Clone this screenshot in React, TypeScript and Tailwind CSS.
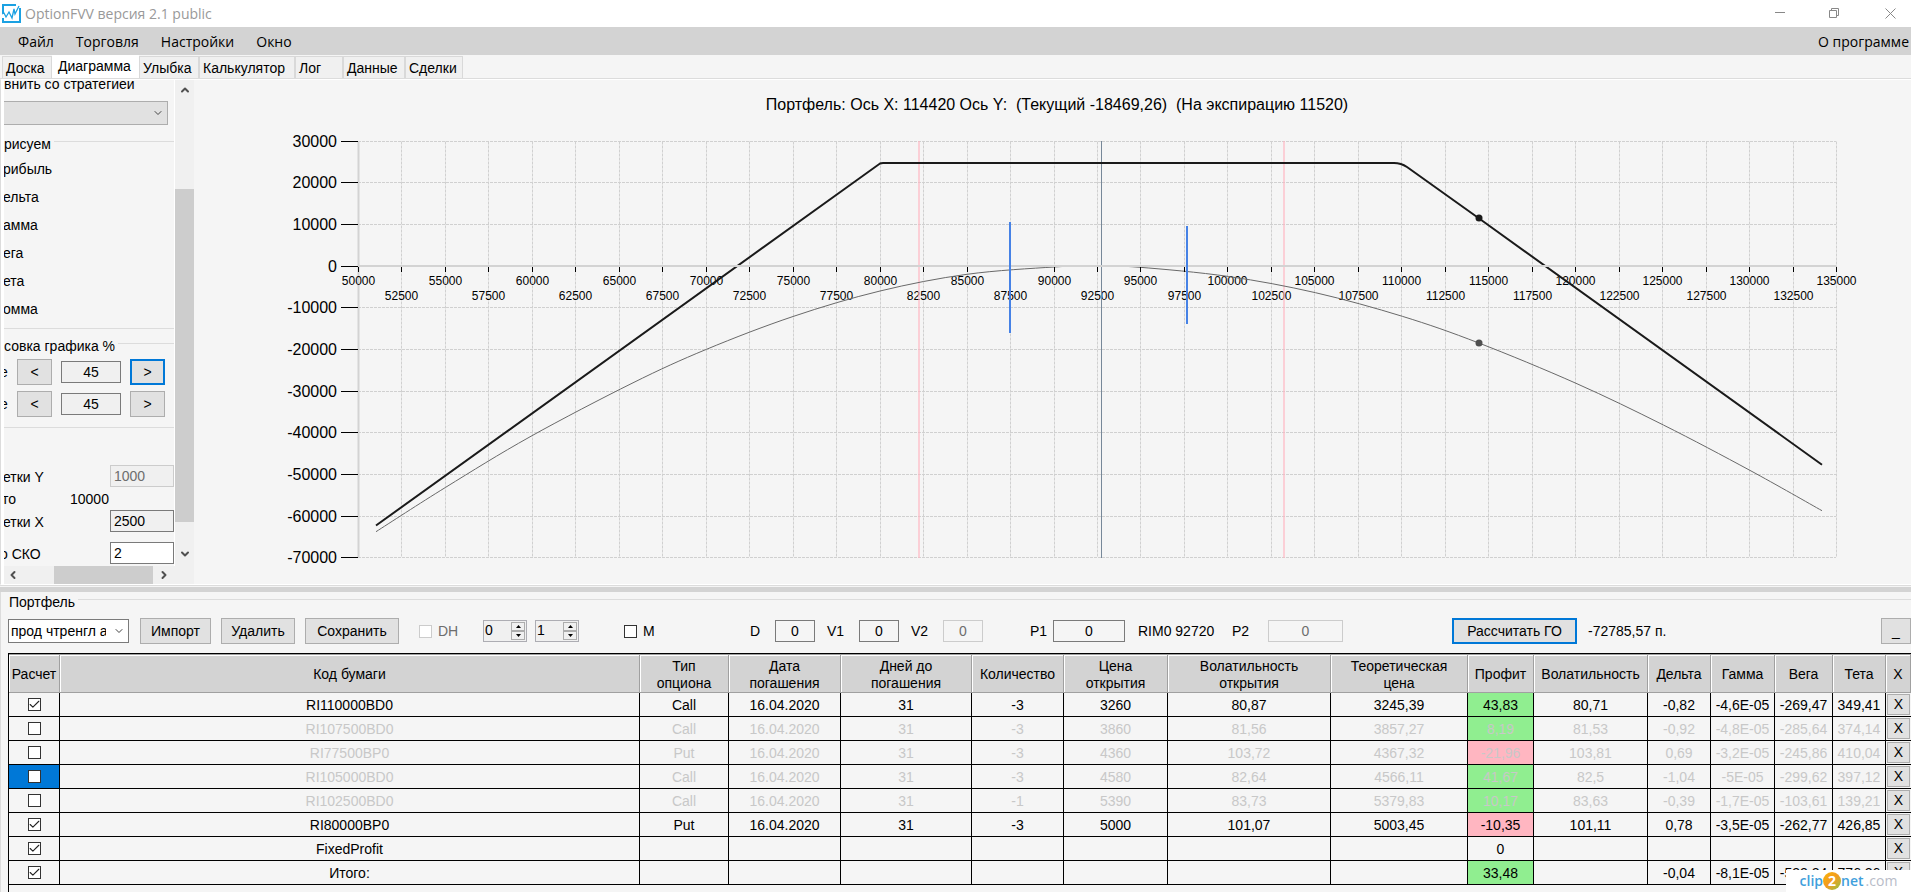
import React from 'react';
import { Check, ChevronDown, ChevronLeft, ChevronRight, ChevronUp } from 'lucide-react';

const menuItems = ['Файл', 'Торговля', 'Настройки', 'Окно'];

const tabs = [
  { name: 'Доска', width: 'w-[50px]' },
  { name: 'Диаграмма', width: 'w-[87px]', active: true },
  { name: 'Улыбка', width: 'w-[60px]' },
  { name: 'Калькулятор', width: 'w-24' },
  { name: 'Лог', width: 'w-12' },
  { name: 'Данные', width: 'w-[62px]' },
  { name: 'Сделки', width: 'w-[58px]' },
];

const columns = [
  { title: 'Расчет', width: 'w-[51px]' },
  { title: 'Код бумаги', width: '' },
  { title: 'Тип опциона', width: 'w-[89px]' },
  { title: 'Дата погашения', width: 'w-[112px]' },
  { title: 'Дней до погашения', width: 'w-[131px]' },
  { title: 'Количество', width: 'w-[92px]' },
  { title: 'Цена открытия', width: 'w-[104px]' },
  { title: 'Волатильность открытия', width: 'w-[163px]' },
  { title: 'Теоретическая цена', width: 'w-[137px]' },
  { title: 'Профит', width: 'w-[66px]' },
  { title: 'Волатильность', width: 'w-[114px]' },
  { title: 'Дельта', width: 'w-[63px]' },
  { title: 'Гамма', width: 'w-[64px]' },
  { title: 'Вега', width: 'w-[58px]' },
  { title: 'Тета', width: 'w-[53px]' },
  { title: 'X', width: 'w-[25px]' },
];

const PROFIT = 8;

const rows = [
  { on: true, cells: ['RI110000BD0', 'Call', '16.04.2020', '31', '-3', '3260', '80,87', '3245,39', '43,83', '80,71', '-0,82', '-4,6E-05', '-269,47', '349,41'] },
  { on: false, cells: ['RI107500BD0', 'Call', '16.04.2020', '31', '-3', '3860', '81,56', '3857,27', '8,19', '81,53', '-0,92', '-4,8E-05', '-285,64', '374,14'] },
  { on: false, cells: ['RI77500BP0', 'Put', '16.04.2020', '31', '-3', '4360', '103,72', '4367,32', '-21,96', '103,81', '0,69', '-3,2E-05', '-245,86', '410,04'] },
  { on: false, selected: true, cells: ['RI105000BD0', 'Call', '16.04.2020', '31', '-3', '4580', '82,64', '4566,11', '41,67', '82,5', '-1,04', '-5E-05', '-299,62', '397,12'] },
  { on: false, cells: ['RI102500BD0', 'Call', '16.04.2020', '31', '-1', '5390', '83,73', '5379,83', '10,17', '83,63', '-0,39', '-1,7E-05', '-103,61', '139,21'] },
  { on: true, cells: ['RI80000BP0', 'Put', '16.04.2020', '31', '-3', '5000', '101,07', '5003,45', '-10,35', '101,11', '0,78', '-3,5E-05', '-262,77', '426,85'] },
  { on: true, cells: ['FixedProfit', '', '', '', '', '', '', '', '0', '', '', '', '', ''] },
  { on: true, cells: ['Итого:', '', '', '', '', '', '', '', '33,48', '', '-0,04', '-8,1E-05', '-532,24', '776,26'] },
];

const profitColor = (value: string) => {
  if (value === '0') return '';
  return value.startsWith('-') ? 'bg-[#ffb6c1]' : 'bg-[#90ee90]';
};

const CheckBox = ({ id, label, checked, disabled }: { id?: string; label?: string; checked?: boolean; disabled?: boolean }) => (
  <span className="relative inline-flex">
    <input
      id={id}
      type="checkbox"
      aria-label={label}
      defaultChecked={checked}
      disabled={disabled}
      className="peer size-[13px] appearance-none border border-[#333333] bg-white disabled:border-[#cccccc]"
    />
    <Check
      size={13}
      strokeWidth={2}
      className="pointer-events-none absolute inset-0 hidden text-[#222222] peer-checked:block"
    />
  </span>
);

const Button = ({ children, className = '', focused, label }: { children: React.ReactNode; className?: string; focused?: boolean; label?: string }) => (
  <button
    aria-label={label}
    className={`h-[26px] shrink-0 bg-[#e1e1e1] text-center ${focused ? 'border-2 border-[#0078d7]' : 'border border-[#adadad]'} ${className}`}
  >
    {children}
  </button>
);

const TextBox = ({ id, value, label, className = '', disabled }: { id?: string; value: string; label?: string; className?: string; disabled?: boolean }) => (
  <input
    id={id}
    type="text"
    aria-label={label}
    defaultValue={value}
    disabled={disabled}
    className={`h-[22px] shrink-0 border border-[#7a7a7a] disabled:border-[#cccccc] disabled:text-[#6d6d6d] ${className}`}
  />
);

const Spinner = ({ value, label }: { value: string; label: string }) => (
  <div className="flex h-[22px] w-11 shrink-0 border border-[#adadb3] bg-[#f0f0f0] p-px">
    <input aria-label={label} defaultValue={value} className="w-[26px] bg-transparent pb-0.5" />
    <div className="flex flex-1 flex-col">
      {['up', 'down'].map((dir) => (
        <button key={dir} aria-label={`${label} ${dir}`} className="flex flex-1 items-center justify-center border border-[#adadad] bg-[#f0f0f0]">
          <svg width="5" height="3" viewBox="0 0 5 3">
            <path d={dir === 'up' ? 'M0 3L2.500 0L5 3Z' : 'M0 0L2.500 3L5 0Z'} fill="#000" />
          </svg>
        </button>
      ))}
    </div>
  </div>
);

const TitleBar = () => (
  <header className="flex h-[27px] items-center bg-white pl-0.5 font-['Open_Sans',sans-serif] text-[#999999]">
    <svg width="19" height="19" viewBox="0 0 19 19" fill="none" stroke="#1ba1e2">
      <path d="M1 9V1H14M1 14V18H18V4" strokeWidth="2" />
      <path d="M0 10L2 9L4 13L7 8L10 14L12 5L13 10L17 2" strokeWidth="1.300" />
    </svg>
    <h1 className="ml-1 text-sm">OptionFVV версия 2.1 public</h1>
    <div className="-mr-2 ml-auto flex">
      <button aria-label="Свернуть" className="flex w-[54px] justify-center">
        <svg width="10" height="10"><path d="M0 4.500H10" stroke="#888" /></svg>
      </button>
      <button aria-label="Развернуть" className="flex w-[54px] justify-center">
        <svg width="10" height="10" fill="none" stroke="#888">
          <path d="M0.500 2.500H7.500V9.500H0.500ZM2.500 2.500V0.500H9.500V7.500H7.500" />
        </svg>
      </button>
      <button aria-label="Закрыть" className="flex w-[58px] justify-center">
        <svg width="11" height="11"><path d="M0.500 0.500L10.500 10.500M10.500 0.500L0.500 10.500" stroke="#888" /></svg>
      </button>
    </div>
  </header>
);

const MenuBar = () => (
  <nav className="flex h-7 items-center bg-[#d3d3d3] pt-px pr-0.5 pl-[18px] font-['Open_Sans',sans-serif]">
    <div className="flex gap-[22px]">
      {menuItems.map((item) => (
        <button key={item}>{item}</button>
      ))}
    </div>
    <button className="ml-auto">О программе</button>
  </nav>
);

const TabStrip = () => (
  <div role="tablist" className="flex h-6 items-end border-b border-[#dcdcdc] pl-0.5">
    {tabs.map((tab) => (
      <button
        key={tab.name}
        role="tab"
        aria-selected={!!tab.active}
        className={`shrink-0 text-left whitespace-nowrap ${tab.width} ${
          tab.active ? 'h-[23px] bg-white pb-0.5 pl-1.5' : 'h-[22px] border border-b-0 border-[#d9d9d9] bg-[#f0f0f0] pl-[3px]'
        }`}
      >
        {tab.name}
      </button>
    ))}
  </div>
);

const GroupLine = ({ title }: { title: string }) => (
  <div className="flex h-[17px] items-start gap-[3px]">
    <span className="leading-5">{title}</span>
    <hr className="mt-[7px] flex-1 border-[#dcdcdc]" />
  </div>
);

const Sidebar = () => (
  <aside className="grid grid-cols-[170px_1fr] grid-rows-[1fr_18px] border-l-[3px] border-white">
    <div className="overflow-hidden">
      <div className="-mt-1.5 h-[27px] leading-5">внить со стратегией</div>
      <div className="relative h-6 w-[164px]">
        <select aria-label="Сравнить со стратегией" className="h-6 w-full appearance-none border border-l-0 border-[#adadad] bg-[#e1e1e1]">
          <option></option>
        </select>
        <ChevronDown size={12} className="pointer-events-none absolute top-1.5 right-1 text-[#444444]" />
      </div>
      <div className="mt-[9px]">
        <GroupLine title="рисуем" />
      </div>
      <ul className="mt-1">
        {['рибыль', 'ельта', 'амма', 'ега', 'ета', 'омма'].map((name) => (
          <li key={name} className="-ml-px h-[28px] leading-[28px]">{name}</li>
        ))}
      </ul>
      <hr className="mt-[5px] border-[#dcdcdc]" />
      <div className="mt-[7px]">
        <GroupLine title="совка графика %" />
      </div>
      {[1, 2].map((n) => (
        <div key={n} className="mt-1.5 flex h-[26px] items-center">
          <span className="-ml-1 w-[17px]">е</span>
          <Button className="w-[35px]">&lt;</Button>
          <TextBox label="Прорисовка, %" value="45" className="mx-[9px] w-[60px] bg-[#f0f0f0] text-center" />
          <Button className="w-[35px]" focused={n === 1}>&gt;</Button>
        </div>
      ))}
      <hr className="mt-[10px] border-[#dcdcdc]" />
      <div className="mt-[37px] flex h-[22px] items-center justify-between">
        <label htmlFor="stepY" className="-ml-px pt-0.5">етки Y</label>
        <TextBox id="stepY" value="1000" disabled className="w-16 bg-[#f0f0f0] px-[3px]" />
      </div>
      <div className="flex h-[23px] items-center">
        <span className="-ml-0.5 w-[68px]">то</span>
        <span>10000</span>
      </div>
      <div className="flex h-[22px] items-center justify-between">
        <label htmlFor="stepX" className="-ml-px pt-0.5">етки X</label>
        <TextBox id="stepX" value="2500" className="w-16 bg-[#f0f0f0] px-[3px]" />
      </div>
      <div className="mt-[10px] flex h-[22px] items-center justify-between">
        <label htmlFor="sko" className="-ml-1 pt-0.5">о СКО</label>
        <TextBox id="sko" value="2" className="w-16 bg-white px-[3px]" />
      </div>
    </div>
    <div className="flex flex-col items-center border-l border-white bg-[#f0f0f0] text-[#505050]">
      <ChevronUp size={12} strokeWidth={4} className="my-1" />
      <div className="mt-[89px] h-[333px] w-full bg-[#cdcdcd]" />
      <ChevronDown size={12} strokeWidth={4} className="mt-[26px]" />
    </div>
    <div className="flex items-center bg-[#f0f0f0] text-[#505050]">
      <ChevronLeft size={12} strokeWidth={4} className="ml-[3px]" />
      <div className="ml-[35px] h-full w-[99px] bg-[#cdcdcd]" />
      <ChevronRight size={12} strokeWidth={4} className="ml-[5px]" />
    </div>
    <div className="bg-[#f0f0f0]" />
  </aside>
);

const LEFT = 358;
const xPos = (v: number) => Math.round(LEFT + ((v - 50000) / 85000) * 1478) + 0.5;
const yPos = (v: number) => Math.round(265.6 - v * 0.004165) + 0.5;

const xTicks = Array.from({ length: 35 }, (_, i) => 50000 + i * 2500);
const yTicks = Array.from({ length: 11 }, (_, i) => 30000 - i * 10000);

const current = [
  [376, 531.7], [445.7, 487.3], [530, 436.8], [632, 383.3], [706.5, 349.3], [793, 316.5], [880, 291],
  [967, 274.3], [1054, 267], [1097, 266], [1140, 267.3], [1228.6, 276.5], [1315.5, 292.7], [1402.3, 316.3],
  [1478.8, 343], [1576, 383.3], [1663.4, 425], [1750, 470.4], [1822, 510.7],
];

// smooth line through the points (Catmull-Rom turned into cubic curves)
const smooth = (pts: number[][]) =>
  pts.slice(0, -1).reduce((d, p, i) => {
    const next = pts[i + 1];
    const before = pts[i - 1] || p;
    const after = pts[i + 2] || next;
    const c1 = [p[0] + (next[0] - before[0]) / 6, p[1] + (next[1] - before[1]) / 6];
    const c2 = [next[0] - (after[0] - p[0]) / 6, next[1] - (after[1] - p[1]) / 6];
    return `${d}C${c1.join(' ')} ${c2.join(' ')} ${next.join(' ')}`;
  }, `M${pts[0].join(' ')}`);

const Chart = () => (
  <svg
    viewBox="194 80 1717 504"
    className="block h-auto w-full font-['Liberation_Sans',Arial,sans-serif]"
    role="img"
    aria-label="Диаграмма портфеля"
  >
    <text x="1057" y="110" fontSize="16" textAnchor="middle" xmlSpace="preserve">
      {'Портфель: Ось X: 114420 Ось Y:  (Текущий -18469,26)  (На экспирацию 11520)'}
    </text>

    <g stroke="#d0d0d0" strokeDasharray="3 1">
      {xTicks.map((v) => (
        <path key={v} d={`M${xPos(v)} ${yPos(30000)}V${yPos(-70000)}`} />
      ))}
      {yTicks.map((v) => (
        <path key={v} d={`M${LEFT} ${yPos(v)}H1836`} />
      ))}
    </g>

    <path d={`M${LEFT + 0.5} 141V558`} stroke="#d3d3d3" strokeWidth="2" />

    {yTicks.map((v) => (
      <g key={v}>
        <path d={`M341 ${yPos(v)}H${LEFT}`} stroke="#000" />
        <text x="337" y={yPos(v) + 5.5} fontSize="16" textAnchor="end">{v}</text>
      </g>
    ))}
    {xTicks.map((v, i) => (
      <text key={v} x={xPos(v)} y={i % 2 ? 300 : 285} fontSize="12" textAnchor="middle">{v}</text>
    ))}

    {/* standard deviation borders and futures price */}
    <path d="M919 141V558M1284 141V558" stroke="#ffb6c1" strokeOpacity="0.6" strokeWidth="2" />
    <path d="M1101.500 141V558" stroke="#778899" />

    <path d={smooth(current)} fill="none" stroke="#696969" />
    <path
      d="M376 525.500L880 163.500Q881 163 883 163H1394Q1401 163 1407 167L1478.800 218.300L1822 464.700"
      fill="none"
      stroke="#1a1a1a"
      strokeWidth="2"
    />
    <circle cx="1479" cy="218" r="3.500" fill="#1a1a1a" />
    <circle cx="1479" cy="343" r="3.500" fill="#505050" />

    <path d={`M${LEFT} 266H1836`} stroke="#d3d3d3" strokeWidth="2" />
    {xTicks.map((v) => (
      <path key={v} d={`M${xPos(v)} 267V272`} stroke="#000" />
    ))}
    <path d="M1010 222V333M1187 226V324" stroke="#4682e6" strokeWidth="2" />
  </svg>
);

const Toolbar = () => (
  <div className="flex h-[42px] items-center pb-0.5 pl-[7px] whitespace-nowrap">
    <div className="relative shrink-0">
      <select aria-label="Портфель" className="h-6 w-[121px] appearance-none border border-[#7a7a7a] bg-white pr-[22px] pl-0.5">
        <option>прод чтренгл август</option>
      </select>
      <ChevronDown size={12} className="pointer-events-none absolute top-1.5 right-1 text-[#444444]" />
    </div>
    <div className="ml-[11px] flex gap-2.5">
      <Button className="w-[71px]">Импорт</Button>
      <Button className="w-[74px]">Удалить</Button>
      <Button className="w-[94px]">Сохранить</Button>
    </div>
    <label className="ml-5 flex w-16 shrink-0 items-center gap-1.5 text-[#6d6d6d]">
      <CheckBox disabled /> DH
    </label>
    <div className="flex gap-2">
      <Spinner value="0" label="Дельта-хедж от" />
      <Spinner value="1" label="Дельта-хедж до" />
    </div>
    <label className="ml-[45px] flex w-[126px] shrink-0 items-center gap-1.5">
      <CheckBox /> M
    </label>
    <label htmlFor="d" className="w-[25px] shrink-0">D</label>
    <TextBox id="d" value="0" className="w-10 text-center" />
    <label htmlFor="v1" className="ml-3 w-8 shrink-0">V1</label>
    <TextBox id="v1" value="0" className="w-10 text-center" />
    <label htmlFor="v2" className="ml-3 w-8 shrink-0">V2</label>
    <TextBox id="v2" value="0" disabled className="w-10 text-center" />
    <label htmlFor="p1" className="ml-[47px] w-[23px] shrink-0">P1</label>
    <TextBox id="p1" value="0" className="w-[72px] text-center" />
    <span className="ml-[13px] w-[94px] shrink-0">RIM0 92720</span>
    <label htmlFor="p2" className="w-9 shrink-0">P2</label>
    <TextBox id="p2" value="0" disabled className="w-[75px] text-center" />
    <Button focused className="ml-[109px] w-[125px]">Рассчитать ГО</Button>
    <span className="ml-[11px]">-72785,57 п.</span>
    <Button label="Свернуть портфель" className="ml-auto w-[30px]">_</Button>
  </div>
);

const PortfolioTable = () => (
  <div className="ml-[7px] flex-1 border-t border-l border-black">
    <table className="w-full table-fixed border-separate border-spacing-0 text-center">
      <colgroup>
        {columns.map((col, i) => (
          <col key={i} className={col.width} />
        ))}
      </colgroup>
      <thead>
        <tr className="h-[39px] bg-[#d3d3d3]">
          {columns.map((col, i) => (
            <th key={i} className="overflow-hidden border-t border-r border-b border-[#a0a0a0] p-0 pt-0.5 leading-[17px] font-normal shadow-[inset_1px_1px_0_#fff]">
              <div className={`flex justify-center ${col.title.includes(' ') && i > 1 ? 'px-3' : ''}`}>{col.title}</div>
            </th>
          ))}
        </tr>
      </thead>
      <tbody>
        {rows.map((row) => (
          <tr key={row.cells[0]} className={`h-6 ${row.on ? 'text-black' : 'text-[#c8c8c8]'}`}>
            <td className={`border-r border-b border-black p-0 ${row.selected ? 'bg-[#0078d7]' : ''}`}>
              <div className="flex justify-center">
                <CheckBox label={`Расчет ${row.cells[0]}`} checked={row.on} />
              </div>
            </td>
            {row.cells.map((cell, i) => (
              <td key={i} className={`border-r border-b border-black p-0 leading-5 whitespace-nowrap ${i === PROFIT ? profitColor(cell) : ''}`}>
                {cell}
              </td>
            ))}
            <td className="border-b border-black p-px text-black">
              <button aria-label={`Удалить ${row.cells[0]}`} className="block h-[21px] w-full border border-[#adadad] bg-[#e1e1e1] leading-[19px]">X</button>
            </td>
          </tr>
        ))}
      </tbody>
    </table>
  </div>
);

const Watermark = () => (
  <div className="fixed right-0 bottom-0 flex h-[22px] w-[125px] items-center justify-center bg-white font-['Open_Sans',sans-serif] font-semibold text-[#3fa0dc]">
    clip
    <span className="flex size-[18px] items-center justify-center rounded-full bg-linear-to-br from-[#f7b500] via-[#f39a1e] to-[#7cc243] font-bold text-white">2</span>
    net
    <span className="ml-0.5 font-normal text-[#b8bcc8]">.com</span>
  </div>
);

const App = () => {
  return (
    <div className="flex min-h-screen flex-col overflow-hidden bg-[#f5f5f5] font-['Liberation_Sans',Arial,sans-serif] text-sm text-black">
      <TitleBar />
      <MenuBar />
      <TabStrip />
      <main className="grid grid-cols-[193px_1fr] border-y border-l border-y-white border-l-[#dcdcdc]">
        <Sidebar />
        <Chart />
      </main>
      <div className="h-[7px] border-t border-b-[5px] border-t-[#dcdcdc] border-b-[#d3d3d3]" />
      <section className="flex flex-1 flex-col border-l border-[#dcdcdc]">
        <div className="flex h-[19px] items-start gap-[3px] pl-2">
          <h2 className="leading-5">Портфель</h2>
          <hr className="mt-[7px] flex-1 border-[#dcdcdc]" />
        </div>
        <Toolbar />
        <PortfolioTable />
      </section>
      <Watermark />
    </div>
  );
};

export default App;
